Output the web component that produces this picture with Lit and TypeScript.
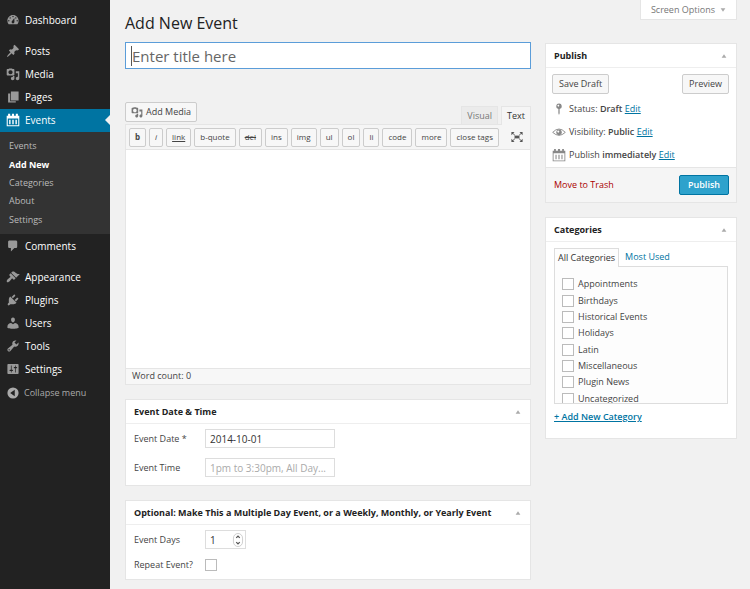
import { LitElement, html, css, svg } from "lit";
import { customElement, property } from "lit/decorators.js";
import { classMap } from "lit/directives/class-map.js";

const ICONS: Record<string, unknown> = {
  dashboard: svg`<path fill-rule="evenodd" d="M3.76 16h12.48c1.1-1.37 1.76-3.11 1.76-5 0-4.42-3.58-8-8-8s-8 3.580-8 8c0 1.890.66 3.630 1.760 5zM10 4c.55 0 1 .45 1 1s-.45 1-1 1-1-.45-1-1 .45-1 1-1zM6 6c.55 0 1 .45 1 1s-.45 1-1 1-1-.45-1-1 .45-1 1-1zm8 0c.55 0 1 .45 1 1s-.45 1-1 1-1-.45-1-1 .45-1 1-1zm-5.370 5.550L12 7v6c0 1.100-.9 2-2 2s-2-.9-2-2c0-.57.24-1.080.63-1.450zM4 10c.55 0 1 .45 1 1s-.45 1-1 1-1-.45-1-1 .45-1 1-1zm12 0c.55 0 1 .45 1 1s-.45 1-1 1-1-.45-1-1 .45-1 1-1z"/>`,
  posts: svg`<path d="M10.44 3.02l1.82-1.82 6.36 6.35-1.83 1.82c-1.05-.68-2.48-.57-3.41.36l-.75.75c-.92.93-1.04 2.35-.35 3.41l-1.83 1.82-2.41-2.41-2.8 2.79c-.42.42-3.38 2.71-3.8 2.29s1.86-3.39 2.28-3.81l2.79-2.79L4.1 9.36l1.83-1.82c1.05.69 2.48.57 3.4-.36l.75-.75c.93-.92 1.05-2.35.36-3.41z"/>`,
  media: svg`<path fill-rule="evenodd" d="M12 11V4c0-.55-.45-1-1-1H9.500L8.500 2h-4L3.500 3H2c-.55 0-1 .45-1 1v7c0 .55.45 1 1 1h9c.55 0 1-.45 1-1zM6.500 4.500a3 3 0 1 1-.1 0z"/><path d="M14 6h5v10.500c0 1.380-1.120 2.500-2.500 2.500S14 17.880 14 16.500s1.120-2.500 2.500-2.500c.17 0 .34.02.5.05V9h-3V6zm-4 8.050V13h2v3.500c0 1.380-1.120 2.500-2.500 2.500S7 17.880 7 16.500 8.120 14 9.500 14c.17 0 .34.02.5.05z"/>`,
  pages: svg`<path d="M7 15V2h11v13H7zm-1 1h8v2H3V5h3v11z"/>`,
  events: svg`<path fill-rule="evenodd" d="M1 4h2V1h3v3h2.500V1h3v3H14V1h3v3h2v15H1V4zm1.500 4v9.500h15V8h-15z"/><path d="M4.500 9.500h2V16h-2zM9 9.500h2V16H9zM13.500 9.500h2V16h-2z"/>`,
  comments: svg`<path d="M5 2h9c1.1 0 2 .9 2 2v7c0 1.1-.9 2-2 2h-2l-5 5v-5H5c-1.1 0-2-.9-2-2V4c0-1.1.9-2 2-2z"/>`,
  appearance: svg`<path d="M14.48 11.06L7.41 3.99l1.5-1.5c.5-.56 2.3-.47 3.51.32 1.21.8 1.43 1.28 2.91 2.1 1.18.64 2.45 1.26 4.45.85zm-.71.71L6.7 4.7 4.93 6.470c-.39.39-.39 1.02 0 1.41l1.06 1.06c.39.39.39 1.03 0 1.42-.6.6-1.43 1.11-2.21 1.69-.35.26-.7.53-1.01.84C1.43 14.23.4 16.08 1.4 17.070c.99 1 2.84-.03 4.18-1.36.31-.31.58-.66.85-1.02.57-.78 1.08-1.61 1.69-2.21.39-.39 1.02-.39 1.41 0l1.06 1.06c.39.39 1.02.39 1.41 0z"/>`,
  plugins: svg`<path d="M13.11 4.36L9.87 7.6 8 5.73l3.24-3.24c.35-.34 1.05-.2 1.56.32.52.51.66 1.21.31 1.55zm-8 1.77l.91-1.12 9.01 9.01-1.19.84c-.71.71-2.63 1.16-3.82 1.16H6.14L4.9 17.260c-.59.59-1.54.59-2.12 0-.59-.58-.59-1.53 0-2.12l1.240-1.240v-3.88c0-1.13.4-3.19 1.09-3.89zm7.26 3.97l3.24-3.24c.34-.35 1.04-.21 1.55.31.52.51.66 1.21.31 1.55l-3.240 3.250z"/>`,
  users: svg`<path d="M10 9.25c-2.27 0-2.73-3.44-2.73-3.44C7 4.020 7.82 2 9.970 2c2.16 0 2.98 2.02 2.71 3.81 0 0-.41 3.440-2.680 3.440zm0 2.570L12.72 10c2.390 0 5.2 2.330 5.2 4.530v2.490s-4.330 1.130-7.920 1.130c-3.650 0-7.920-1.130-7.920-1.130v-2.490c0-2.250 2.620-4.480 5.150-4.480z"/>`,
  tools: svg`<path fill-rule="evenodd" d="M16.68 9.77c-1.34 1.34-3.3 1.67-4.95.99l-5.41 6.52c-.99.99-2.59.99-3.58 0s-.99-2.59 0-3.57l6.52-5.42c-.68-1.65-.35-3.61.99-4.95 1.28-1.28 3.12-1.62 4.72-1.06l-2.89 2.89 2.82 2.82 2.86-2.87c.53 1.58.18 3.39-1.08 4.65zM3.81 16.21c.4.39 1.04.39 1.43 0 .4-.4.4-1.04 0-1.43-.39-.4-1.03-.4-1.43 0-.39.39-.39 1.03 0 1.43z"/>`,
  settings: svg`<path fill-rule="evenodd" d="M18 16V4c0-.55-.45-1-1-1H3c-.55 0-1 .45-1 1v12c0 .55.45 1 1 1h14c.55 0 1-.45 1-1zM8 11h1c.55 0 1 .45 1 1s-.45 1-1 1H8v1.5c0 .28-.22.5-.5.5s-.5-.22-.5-.5V13H6c-.55 0-1-.45-1-1s.45-1 1-1h1V5.5c0-.28.22-.5.5-.5s.5.22.5.5V11zm5-2h-1c-.55 0-1-.45-1-1s.45-1 1-1h1V5.5c0-.28.22-.5.5-.5s.5.22.5.5V7h1c.55 0 1 .45 1 1s-.45 1-1 1h-1v5.5c0 .28-.22.5-.5.5s-.5-.22-.5-.5V9z"/>`,
  collapse: svg`<path fill-rule="evenodd" d="M10 2a8 8 0 1 0 0 16a8 8 0 1 0 0-16zM12.500 5.500v9L6 10z"/>`,
  pin: svg`<path fill-rule="evenodd" d="M10 2a4 4 0 0 1 .9 7.900V16L10 18.500 9.100 16V9.900A4 4 0 0 1 10 2zM9 4a1.200 1.200 0 1 0 .1 0z"/>`,
  eye: svg`<path fill="none" stroke="currentColor" stroke-width="1.300" d="M1 10.500Q10 1 19 10.500Q10 19 1 10.500z"/><path fill-rule="evenodd" d="M10 6.500a4 4 0 1 0 .1 0zM9 7.800a1.400 1.400 0 1 1-.1 0z"/>`,
  calendar: svg`<path fill-rule="evenodd" d="M1 4h2V1.500h2.500V4h3V1.500h3V4h3V1.500H17V4h2v15H1V4zm1.200 3.500v10.300h15.600V7.500H2.200z"/><path d="M5 9.500h1.500V16H5zM9.200 9.500h1.600V16H9.200zM13.500 9.500H15V16h-1.500z"/>`,
  fullscreen: svg`<path d="M2 3h4.500L2 7.500zM18 3v4.500L13.500 3zM2 17v-4.500L6.500 17zM18 17h-4.500l4.500-4.500z"/><path fill="none" stroke="currentColor" stroke-width="1.300" d="M3 4l4 3.500M17 4l-4 3.500M3 16l4-3.500M17 16l-4-3.500"/><path d="M6.500 8h7v4h-7z"/>`,
  up: svg`<path d="M10 4l8 12H2z"/>`,
  down: svg`<path d="M10 16L2 4h16z"/>`,
  stepper: svg`<rect x="3.500" y=".7" width="13" height="18.600" rx="6.500" fill="#fff" stroke="#bbb" stroke-width="1"/><path fill="none" stroke="#555" stroke-width="1.800" d="M7.500 7L10 4.500 12.500 7M7.500 13l2.500 2.500 2.500-2.500"/>`,
};

const icon = (name: string) =>
  html`<svg class="icon" viewBox="0 0 20 20" fill="currentColor" aria-hidden="true">${ICONS[name]}</svg>`;

const base = css`
  * { box-sizing: border-box; }
  :host { display: block; font: 9px/14px "Open Sans", sans-serif; color: #444; }
  h1, h2, ul, p { margin: 0; padding: 0; font-weight: 400; }
  ul { list-style: none; }
  button, input, textarea { font: inherit; color: inherit; margin: 0; border-radius: 0; outline: none; }
  button { cursor: pointer; white-space: nowrap; }
  a { color: #0074a2; }
  .icon { width: 14px; height: 14px; flex: none; display: block; }
  .btn {
    height: 20px; padding: 0 6px; border: 1px solid #ccc; border-radius: 2px;
    background: #f7f7f7; color: #444; display: flex; align-items: center; justify-content: center;
  }
  input[type="checkbox"] {
    appearance: none; width: 12px; height: 12px; border: 1px solid #bbb; background: #fff; flex: none;
  }
`;

@customElement("admin-menu")
class AdminMenu extends LitElement {
  static styles = [base, css`
    :host { background: #222; color: #eee; padding: 8px 0; font-size: 10px; }
    ul { display: grid; grid-auto-rows: 1fr; }
    .first { height: 23px; margin-bottom: 8px; }
    .content { height: 93px; }
    .after { height: 23px; margin-bottom: 8px; }
    .manage { height: 116px; }
    .item { display: flex; align-items: center; gap: 5px; padding-left: 6px; height: 100%; color: #fff; text-decoration: none; }
    .item .icon { color: #999; }
    .current { background: #0074a2; }
    .current .icon { color: #fff; }
    .current::after {
      content: ""; margin-left: auto; border: 5px solid transparent; border-right-color: #f1f1f1; border-left-width: 0;
    }
    .sub { height: 102px; padding: 5px 0; background: #333; font-size: 9px; }
    .sub a { display: flex; align-items: center; height: 100%; padding-left: 9px; color: #bbb; text-decoration: none; }
    .sub .on { color: #fff; font-weight: 700; }
    .collapse {
      display: flex; align-items: center; gap: 4px; height: 23px; width: 100%; padding: 0 0 0 6px;
      border: 0; background: none; color: #aaa; font-size: 9px;
    }
  `];

  item(name: string, label: string, current = false) {
    return html`<li><a href="#" class=${classMap({ item: true, current })}>${icon(name)}${label}</a></li>`;
  }

  render() {
    return html`
      <nav>
        <ul class="first">${this.item("dashboard", "Dashboard")}</ul>
        <ul class="content">
          ${this.item("posts", "Posts")}${this.item("media", "Media")}
          ${this.item("pages", "Pages")}${this.item("events", "Events", true)}
        </ul>
        <ul class="sub">
          ${["Events", "Add New", "Categories", "About", "Settings"].map(
            (t) => html`<li><a href="#" class=${classMap({ on: t === "Add New" })}>${t}</a></li>`)}
        </ul>
        <ul class="after">${this.item("comments", "Comments")}</ul>
        <ul class="manage">
          ${this.item("appearance", "Appearance")}${this.item("plugins", "Plugins")}
          ${this.item("users", "Users")}${this.item("tools", "Tools")}${this.item("settings", "Settings")}
        </ul>
        <button class="collapse">${icon("collapse")}Collapse menu</button>
      </nav>`;
  }
}

@customElement("meta-box")
class MetaBox extends LitElement {
  @property() heading = "";
  static styles = [base, css`
    :host { background: #fff; border: 1px solid #e5e5e5; }
    header { display: flex; align-items: center; justify-content: space-between; height: 24px; padding: 0 9px 0 8px; border-bottom: 1px solid #eee; }
    h2 { font-size: 9px; font-weight: 700; color: #222; white-space: nowrap; }
    .toggle { border: 0; background: none; padding: 0; color: #aaa; }
    .toggle .icon { width: 6px; height: 6px; }
  `];
  render() {
    return html`<header><h2>${this.heading}</h2>
      <button class="toggle" aria-label="Toggle panel">${icon("up")}</button></header><slot></slot>`;
  }
}

@customElement("post-editor")
class PostEditor extends LitElement {
  static styles = [base, css`
    .top { display: flex; align-items: flex-end; justify-content: space-between; height: 22px; }
    .media { align-self: flex-start; gap: 3px; padding: 0 5px; }
    .media .icon { width: 12px; height: 12px; color: #777; }
    .tabs { display: flex; align-items: flex-end; gap: 3px; }
    .tab { height: 18px; padding: 0 5px; border: 1px solid #e5e5e5; border-bottom: 0; background: #ebebeb; color: #777; }
    .tab.on { background: #f5f5f5; color: #333; height: 19px; margin-bottom: -1px; position: relative; }
    .frame { border: 1px solid #e5e5e5; background: #fff; }
    .bar { display: flex; align-items: center; gap: 3px; height: 25px; padding: 0 3px; background: #f5f5f5; border-bottom: 1px solid #e5e5e5; }
    .bar .btn { height: 19px; padding: 0 5px; font-size: 8px; }
    .bar .b { font-weight: 700; }
    .bar .i { font-style: italic; }
    .bar .link { text-decoration: underline; }
    .bar .del { text-decoration: line-through; }
    .full { border: 0; background: none; padding: 0; margin-left: auto; margin-right: 3px; color: #555; }
    textarea { display: block; width: 100%; height: 218px; border: 0; padding: 6px; resize: none; background: #fff; }
    .count { height: 16px; padding: 0 6px; border-top: 1px solid #e5e5e5; background: #f7f7f7; }
  `];
  render() {
    const tags = ["b", "i", "link", "b-quote", "del", "ins", "img", "ul", "ol", "li", "code", "more", "close tags"];
    return html`
      <div class="top">
        <button class="btn media">${icon("media")}Add Media</button>
        <div class="tabs"><button class="tab">Visual</button><button class="tab on">Text</button></div>
      </div>
      <div class="frame">
        <div class="bar">
          ${tags.map((t) => html`<button class="btn ${t}">${t}</button>`)}
          <button class="full" aria-label="Fullscreen">${icon("fullscreen")}</button>
        </div>
        <textarea aria-label="Content"></textarea>
        <p class="count">Word count: 0</p>
      </div>`;
  }
}

@customElement("app-root")
class AppRoot extends LitElement {
  static styles = [base, css`
    :host { display: grid; grid-template-columns: 110px minmax(0, 1fr); min-height: 100vh; background: #f1f1f1; }
    main { padding: 0 13px 0 15px; }
    .head { display: flex; justify-content: space-between; align-items: flex-start; height: 42px; }
    h1 { font-size: 16px; line-height: 22px; padding-top: 12px; color: #222; }
    .options {
      display: flex; align-items: center; gap: 5px; height: 20px; padding: 0 10px; border: 1px solid #e5e5e5; border-top: 0;
      background: #fff; color: #777;
    }
    .options .icon { width: 6px; height: 6px; color: #aaa; }
    .cols { display: grid; grid-template-columns: minmax(0, 1fr) 192px; gap: 14px; align-items: start; }
    .col { display: grid; grid-template-columns: minmax(0, 1fr); gap: 14px; }
    .side { padding-top: 1px; }
    .title { display: flex; align-items: center; height: 27px; margin-bottom: 33px; padding-left: 5px; border: 1px solid #5b9dd9; background: #fff; }
    .title::before { content: ""; width: 1px; height: 20px; background: #555; }
    .title input { flex: 1; min-width: 0; padding: 0; border: 0; background: none; font-size: 15px; line-height: 22px; }
    .title input::placeholder { color: #666; opacity: 1; }
    .fields { display: grid; grid-template-columns: 71px 130px; align-items: center; }
    .when { grid-auto-rows: 29px; padding: 0 8px 3px; }
    .repeat { grid-auto-rows: 25px; padding: 2px 8px; }
    .text { width: 130px; height: 19px; border: 1px solid #ddd; padding: 0 4px; font-size: 10px; color: #333; }
    .text::placeholder { color: #aaa; opacity: 1; }
    .num { display: flex; align-items: center; width: 41px; height: 19px; border: 1px solid #ddd; }
    .num input { flex: 1; min-width: 0; border: 0; padding: 0 4px; font-size: 10px; color: #333; appearance: textfield; background: none; }
    .num input::-webkit-inner-spin-button { appearance: none; }
    .row { display: flex; justify-content: space-between; padding: 6px 7px 3px 6px; }
    .status { display: grid; grid-auto-rows: 23px; padding: 0 6px 1px; }
    .status li { display: flex; align-items: center; gap: 3px; }
    .status .icon { color: #888; }
    b { font-weight: 600; }
    .foot { display: flex; align-items: center; justify-content: space-between; height: 35px; padding: 0 7px 0 8px; border-top: 1px solid #e5e5e5; background: #f5f5f5; }
    .trash { color: #a00; text-decoration: none; }
    .primary { background: #2ea2cc; border-color: #0074a2; color: #fff; font-weight: 600; padding: 0 8px; }
    .cats { padding: 6px 8px 14px; }
    .ctabs { display: flex; }
    .ctabs a { height: 18px; padding: 0 6px; line-height: 17px; text-decoration: none; }
    .ctabs .on { border: 1px solid #ddd; border-bottom: 0; background: #fdfdfd; color: #333; padding: 0 3px; height: 19px; margin-bottom: -1px; position: relative; }
    .panel { height: 138px; border: 1px solid #ddd; background: #fdfdfd; overflow: hidden; padding: 9px 7px; }
    .list { display: grid; grid-auto-rows: 1fr; height: 131px; }
    .list label { display: flex; align-items: center; gap: 4px; height: 100%; }
    .add { display: block; margin-top: 6px; font-weight: 600; }
  `];

  render() {
    const cats = ["Appointments", "Birthdays", "Historical Events", "Holidays", "Latin", "Miscellaneous", "Plugin News", "Uncategorized"];
    return html`
      <admin-menu></admin-menu>
      <main>
        <div class="head"><h1>Add New Event</h1><button class="options">Screen Options ${icon("down")}</button></div>
        <div class="cols">
          <div class="col">
            <div>
              <div class="title"><input type="text" placeholder="Enter title here" aria-label="Title"></div>
              <post-editor></post-editor>
            </div>
            <meta-box heading="Event Date &amp; Time">
              <div class="fields when">
                <label for="date">Event Date *</label><input class="text" id="date" value="2014-10-01">
                <label for="time">Event Time</label><input class="text" id="time" placeholder="1pm to 3:30pm, All Day...">
              </div>
            </meta-box>
            <meta-box heading="Optional: Make This a Multiple Day Event, or a Weekly, Monthly, or Yearly Event">
              <div class="fields repeat">
                <label for="days">Event Days</label><span class="num"><input id="days" type="number" value="1">${icon("stepper")}</span>
                <label for="again">Repeat Event?</label><input id="again" type="checkbox">
              </div>
            </meta-box>
          </div>
          <div class="col side">
            <meta-box heading="Publish">
              <div class="row"><button class="btn">Save Draft</button><button class="btn">Preview</button></div>
              <ul class="status">
                <li>${icon("pin")}<span>Status: <b>Draft</b> <a href="#">Edit</a></span></li>
                <li>${icon("eye")}<span>Visibility: <b>Public</b> <a href="#">Edit</a></span></li>
                <li>${icon("calendar")}<span>Publish <b>immediately</b> <a href="#">Edit</a></span></li>
              </ul>
              <div class="foot"><a class="trash" href="#">Move to Trash</a><button class="btn primary">Publish</button></div>
            </meta-box>
            <meta-box heading="Categories">
              <div class="cats">
                <div class="ctabs"><a class="on" href="#">All Categories</a><a href="#">Most Used</a></div>
                <div class="panel"><ul class="list">
                  ${cats.map((c) => html`<li><label><input type="checkbox">${c}</label></li>`)}
                </ul></div>
                <a class="add" href="#">+ Add New Category</a>
              </div>
            </meta-box>
          </div>
        </div>
      </main>`;
  }
}
